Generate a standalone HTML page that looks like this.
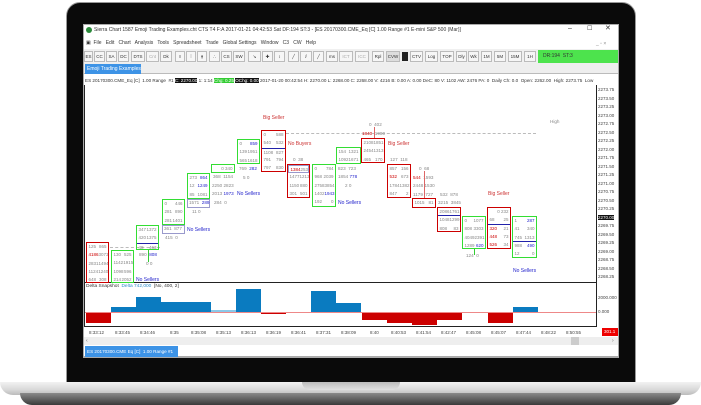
<!DOCTYPE html>
<html><head><meta charset="utf-8"><style>
*{margin:0;padding:0;box-sizing:border-box}
body{width:701px;height:405px;background:#fff;position:relative;overflow:hidden;font-family:"Liberation Sans",sans-serif}
.a{position:absolute}
.t{position:absolute;font-size:5px;line-height:6px;color:#333;white-space:nowrap}
.c{position:absolute;border:1.5px solid #3d3}
.c.r{border-color:#c00}
.c div{height:8.3px;font-size:4.5px;line-height:8px;color:#888;display:flex;justify-content:space-between;padding:0 1.5px;overflow:hidden}
.o{position:absolute;font-size:4.6px;color:#888;white-space:nowrap}
.bl{color:#22c;font-size:5px;position:absolute;white-space:nowrap}
.rd{color:#c33;font-size:5px;position:absolute;white-space:nowrap}
.tb{position:absolute;top:51px;height:11px;border:1px solid #bbb;background:#f6f6f6;font-size:4.5px;line-height:9px;text-align:center;color:#333}
.pl{position:absolute;left:598px;font-size:4.5px;color:#444}
.tm{position:absolute;top:330px;font-size:4.5px;color:#444}
.bar{position:absolute;width:25px}
</style></head><body>
<!-- laptop -->
<div class="a" style="left:66px;top:2px;width:570px;height:384px;background:#0a0a0a;border:1px solid #999;border-radius:14px 14px 0 0"></div>
<div class="a" style="left:0;top:382px;width:701px;height:13px;background:linear-gradient(#f2f2f2,#d8d8d8 60%,#bbb);border-radius:0 0 30px 30px"></div>
<div class="a" style="left:20px;top:393px;width:661px;height:12px;background:linear-gradient(#8a8a8a,#3a3a3a);border-radius:0 0 40px 40px"></div>
<div class="a" style="left:302px;top:382px;width:98px;height:8px;background:linear-gradient(#bbb,#e0e0e0);border-radius:0 0 8px 8px"></div>
<!-- screen -->
<div class="a" style="left:83px;top:24px;width:536px;height:334px;background:#fff;border:1px solid #aaa"></div>
<div class="a" style="left:86px;top:27px;width:6px;height:6px;border-radius:50%;background:#2a8a3a"></div>
<div class="t" style="left:94px;top:27px;font-size:5px">Sierra Chart 1587 Emoji Trading Examples.cht  CTS T4 F:A 2017-01-21  04:42:53 Sat  DF:194  ST:3 - [ES 20170300.CME_Eq [C]  1.00 Range  #1  E-mini S&amp;P 500 (Mar)]</div>
<div class="t" style="left:568px;top:26px;font-size:7px">–</div>
<div class="t" style="left:587px;top:26px;font-size:6px">☐</div>
<div class="t" style="left:605px;top:26px;font-size:7px">✕</div>
<div class="t" style="left:86px;top:40px">▣ &nbsp;File &nbsp; Edit &nbsp; Chart &nbsp; Analysis &nbsp; Tools &nbsp; Spreadsheet &nbsp; Trade &nbsp; Global Settings &nbsp; Window &nbsp; C3 &nbsp; CW &nbsp; Help</div>
<div class="t" style="left:596px;top:41px;color:#888">_ ▫ ×</div>
<div class="a" style="left:84px;top:49px;width:534px;height:14px;background:#f0f0f0"></div>
<div class="tb" style="left:84px;width:9px">ES</div><div class="tb" style="left:94px;width:11px">CC</div><div class="tb" style="left:106px;width:11px">SA</div><div class="tb" style="left:118px;width:11px">DC</div><div class="tb" style="left:131px;width:14px">DTS</div><div class="tb" style="left:146px;width:13px;color:#aaa">Cnt</div><div class="tb" style="left:160px;width:12px">Dk</div>
<div class="tb" style="left:175px;width:10px">⁝⁝</div><div class="tb" style="left:186px;width:10px">⁞</div><div class="tb" style="left:197px;width:10px">⫵</div><div class="tb" style="left:209px;width:11px">∴</div><div class="tb" style="left:221px;width:11px">CS</div><div class="tb" style="left:233px;width:12px">SW</div>
<div class="tb" style="left:248px;width:13px">↘</div><div class="tb" style="left:262px;width:11px">✚</div><div class="tb" style="left:274px;width:11px">↕</div><div class="tb" style="left:288px;width:11px">╱</div><div class="tb" style="left:300px;width:12px">⫽</div><div class="tb" style="left:313px;width:11px">╱</div><div class="tb" style="left:326px;width:12px">ms</div><div class="tb" style="left:339px;width:14px;color:#aaa">ICT</div><div class="tb" style="left:355px;width:14px;color:#aaa">ICC</div>
<div class="tb" style="left:372px;width:12px">Rpl</div><div class="tb" style="left:386px;width:14px;background:#ddd">CVW</div><div class="a" style="left:402px;top:52px;width:6px;height:9px;background:#222"></div>
<div class="tb" style="left:410px;width:13px">CTV</div><div class="tb" style="left:425px;width:13px">Log</div><div class="tb" style="left:440px;width:14px">TOP</div><div class="tb" style="left:456px;width:11px">Dly</div><div class="tb" style="left:468px;width:11px">Wk</div><div class="tb" style="left:481px;width:11px">1M</div><div class="tb" style="left:494px;width:12px">5M</div><div class="tb" style="left:508px;width:14px">15M</div><div class="tb" style="left:524px;width:12px">1H</div>
<div class="a" style="left:538px;top:50px;width:80px;height:13px;background:#4de34d"></div>
<div class="t" style="left:543px;top:53px">DR:194 &nbsp;ST:3</div>
<div class="a" style="left:84px;top:63px;width:534px;height:11px;background:#eee;border-bottom:1px solid #bbb"></div>
<div class="a" style="left:85px;top:64px;width:56px;height:10px;background:#3d93e6"></div>
<div class="t" style="left:87px;top:66px;color:#fff">Emoji Trading Examples</div>
<div class="t" style="left:85px;top:78px;font-size:4.6px">ES 20170300.CME_Eq [C] &nbsp;1.00 Range &nbsp;#1 <span style="background:#111;color:#fff">C: 2270.00</span> 1: 1:14 <span style="background:#3c3;color:#fff">Chg: 0.25</span> <span style="background:#111;color:#fff">OChg: 0.00</span> 2017-01-20 00:42:54 H: 2270.00 L: 2268.00 C: 2268.00 V: 4216 B: 0.00 A: 0.00 DeC: 80 V: 1102 AW: 2476 PA: 0 &nbsp;Daily Ch: 0.0 &nbsp;Open: 2262.00 &nbsp;High: 2273.75 &nbsp;Low</div>
<!-- chart frame -->
<div class="a" style="left:596px;top:85px;width:1px;height:241px;background:#222"></div>
<div class="a" style="left:84px;top:282px;width:513px;height:1px;background:#222"></div>
<div class="a" style="left:84px;top:326px;width:513px;height:1px;background:#222"></div>
<div class="a" style="left:84px;top:85px;width:1px;height:241px;background:#222"></div>
<!-- price labels -->
<div class="pl" style="top:87px">2273.75</div><div class="pl" style="top:96px">2273.50</div><div class="pl" style="top:104px">2273.25</div><div class="pl" style="top:113px">2273.00</div><div class="pl" style="top:121px">2272.75</div><div class="pl" style="top:130px">2272.50</div><div class="pl" style="top:138px">2272.25</div><div class="pl" style="top:147px">2272.00</div><div class="pl" style="top:155px">2271.75</div><div class="pl" style="top:164px">2271.50</div><div class="pl" style="top:172px">2271.25</div><div class="pl" style="top:181px">2271.00</div><div class="pl" style="top:189px">2270.75</div><div class="pl" style="top:198px">2270.50</div><div class="pl" style="top:206px">2270.25</div><div class="pl" style="top:215px;background:#111;color:#fff">2270.00</div><div class="pl" style="top:223px">2269.75</div><div class="pl" style="top:232px">2269.50</div><div class="pl" style="top:240px">2269.25</div><div class="pl" style="top:249px">2269.00</div><div class="pl" style="top:257px">2268.75</div><div class="pl" style="top:266px">2268.50</div><div class="pl" style="top:274px">2268.25</div>
<div class="pl" style="top:295px">2000.000</div><div class="pl" style="top:309px">0.000</div>
<!-- dashed lines -->
<div class="a" style="left:286px;top:133px;width:250px;border-top:1px dashed #bbb"></div>
<div class="a" style="left:110px;top:247px;width:50px;border-top:1px dashed #bbb"></div>
<div class="o" style="left:550px;top:119px">High</div>
<!-- candles -->
<div class="c r" style="left:86px;top:242px;width:23px;height:41px"><div><span>125</span><span>865</span></div><div><span style="color:#c00">4186</span><span>3073</span></div><div><span>2831</span><span>1494</span></div><div><span>1124</span><span>1240</span></div><div><span>648</span><span>308</span></div></div>
<div class="c" style="left:111px;top:250px;width:23px;height:33px"><div><span>130</span><span>525</span></div><div><span>1142</span><span>1915</span></div><div><span>1098</span><span>596</span></div><div><span>214</span><span>2052</span></div></div>
<div class="bl" style="left:136px;top:277px">No Sellers</div>
<div class="c" style="left:136px;top:225px;width:23px;height:25px"><div><span>347</span><span>1372</span></div><div><span>420</span><span>1375</span></div><div style="border-top:1px solid #22a"><span>48</span><span>463</span></div></div>
<div class="o" style="left:139px;top:252px">890 &nbsp;<span style="color:#22c">808</span></div><div class="o" style="left:146px;top:261px">0 0</div><div class="a" style="left:148px;top:250px;width:1px;height:12px;background:#3c3"></div>
<div class="c" style="left:162px;top:199px;width:23px;height:26px"><div><span>0</span><span>446</span></div><div><span>281</span><span>890</span></div><div><span>281</span><span>1401</span></div></div>
<div class="a" style="left:162px;top:225px;width:23px;height:9px;border:1px solid #99c"></div><div class="o" style="left:164px;top:226px">361 &nbsp;877</div><div class="o" style="left:165px;top:235px">415 &nbsp;0</div>
<div class="bl" style="left:187px;top:227px">No Sellers</div>
<div class="c" style="left:187px;top:173px;width:23px;height:26px"><div><span>273</span><span style="color:#22c">864</span></div><div><span>12</span><span style="color:#22c">1249</span></div><div><span>85</span><span>1081</span></div></div>
<div class="a" style="left:187px;top:199px;width:23px;height:9px;border:1px solid #99c"></div><div class="o" style="left:189px;top:200px">1571 &nbsp;<span style="color:#22c">289</span></div><div class="o" style="left:192px;top:209px">11 0</div>
<div class="c" style="left:211px;top:164px;width:24px;height:9px"><div><span></span><span>0 340</span></div></div>
<div class="o" style="left:213px;top:174px">368 &nbsp;1154</div><div class="o" style="left:212px;top:183px">2250 2823</div><div class="o" style="left:212px;top:191px">2013 <span style="color:#22c">1973</span></div><div class="o" style="left:214px;top:200px">284 &nbsp;0</div>
<div class="bl" style="left:237px;top:191px">No Sellers</div>
<div class="c" style="left:237px;top:139px;width:23px;height:25px"><div><span>0</span><span style="color:#22c">859</span></div><div><span>139</span><span>1951</span></div><div><span>565</span><span>1618</span></div></div>
<div class="o" style="left:239px;top:166px">769 &nbsp;<span style="color:#22c">282</span></div><div class="o" style="left:243px;top:175px">5 0</div>
<div class="c r" style="left:261px;top:130px;width:25px;height:42px"><div><span>0</span><span>588</span></div><div><span>540</span><span>532</span></div><div style="border-top:1px solid #22a"><span>1108</span><span>827</span></div><div><span>791</span><span>794</span></div><div><span>797</span><span>830</span></div></div>
<div class="rd" style="left:263px;top:115px">Big Seller</div><div class="rd" style="left:288px;top:141px">No Buyers</div>
<div class="o" style="left:293px;top:157px">0 &nbsp;38</div>
<div class="c r" style="left:287px;top:164px;width:23px;height:34px"><div style="border:1px solid #99c"><span style="color:#c00">1384</span><span>2538</span></div><div><span>1477</span><span>1213</span></div><div><span>1150</span><span>880</span></div><div><span>301</span><span>501</span></div></div>
<div class="c" style="left:312px;top:164px;width:24px;height:43px"><div><span>0</span><span>784</span></div><div><span>968</span><span>2039</span></div><div><span>2758</span><span>3854</span></div><div><span>1402</span><span style="color:#22c">1943</span></div><div><span>192</span><span>0</span></div></div>
<div class="bl" style="left:338px;top:200px">No Sellers</div>
<div class="c" style="left:336px;top:147px;width:25px;height:17px"><div><span>154</span><span>1321</span></div><div><span>1092</span><span>1671</span></div></div>
<div class="o" style="left:338px;top:166px">823 &nbsp;723</div><div class="o" style="left:338px;top:174px">1854 <span style="color:#22c">778</span></div><div class="o" style="left:345px;top:183px">2 0</div>
<div class="o" style="left:369px;top:122px">0 &nbsp;402</div><div class="a" style="left:374px;top:127px;width:1px;height:11px;background:#d66"></div>
<div class="o" style="left:362px;top:131px"><span style="color:#c00">1840</span> &nbsp;1980</div>
<div class="c r" style="left:361px;top:138px;width:24px;height:25px"><div><span>2108</span><span>1851</span></div><div><span>2454</span><span>1313</span></div><div><span>465</span><span>170</span></div></div>
<div class="rd" style="left:388px;top:141px">Big Seller</div>
<div class="o" style="left:390px;top:157px">127 &nbsp;118</div>
<div class="c r" style="left:387px;top:164px;width:24px;height:34px"><div><span>857</span><span>156</span></div><div><span style="color:#c00">532</span><span>673</span></div><div><span>1784</span><span>1382</span></div><div><span>847</span><span>2</span></div></div>
<div class="o" style="left:419px;top:166px">0 &nbsp;68</div><div class="o" style="left:413px;top:175px"><span style="color:#c00">544</span> &nbsp;1593</div><div class="o" style="left:413px;top:183px">2448 1530</div><div class="o" style="left:413px;top:192px">1179 &nbsp;727</div>
<div class="a" style="left:424px;top:171px;width:1px;height:27px;background:#d66"></div>
<div class="c r" style="left:412px;top:198px;width:24px;height:10px"><div><span>1015</span><span>81</span></div></div>
<div class="o" style="left:440px;top:192px">532 &nbsp;878</div><div class="o" style="left:438px;top:200px">3215 &nbsp;3845</div>
<div class="c r" style="left:437px;top:207px;width:24px;height:25px"><div style="border-bottom:1px solid #22a"><span>2086</span><span>1761</span></div><div><span>1048</span><span>1299</span></div><div><span>808</span><span>83</span></div></div>
<div class="c" style="left:462px;top:216px;width:24px;height:33px"><div><span>0</span><span>1077</span></div><div><span>808</span><span>3303</span></div><div><span>4049</span><span>2391</span></div><div><span>1289</span><span style="color:#22c">620</span></div></div>
<div class="o" style="left:466px;top:253px">124 &nbsp;0</div><div class="a" style="left:474px;top:249px;width:1px;height:6px;background:#3c3"></div>
<div class="rd" style="left:488px;top:191px">Big Seller</div>
<div class="c r" style="left:487px;top:207px;width:24px;height:42px"><div><span></span><span>0 232</span></div><div style="border-bottom:1px solid #22a"><span>68</span><span>25</span></div><div><span style="color:#c00">320</span><span>21</span></div><div><span style="color:#c00">448</span><span>73</span></div><div><span style="color:#c00">526</span><span>34</span></div></div>
<div class="c" style="left:512px;top:216px;width:25px;height:42px"><div><span>1</span><span style="color:#22c">287</span></div><div><span>41</span><span>340</span></div><div style="border-bottom:1px solid #22a"><span>745</span><span>1313</span></div><div><span>988</span><span style="color:#22c">490</span></div><div><span>12</span><span>0</span></div></div>
<div class="bl" style="left:513px;top:268px">No Sellers</div>
<!-- subchart -->
<div class="t" style="left:86px;top:284px;font-size:4.8px">Delta Snapshot &nbsp;<span style="color:#2a8ac8">Delta 742,000</span> &nbsp;[No, 400, 2]</div>
<div class="a" style="left:85px;top:312px;width:511px;height:1px;background:#e88"></div>
<div class="bar" style="left:86px;top:313px;height:10px;background:#c00"></div>
<div class="bar" style="left:111px;top:307px;height:5px;background:#0a7bc0"></div>
<div class="bar" style="left:136px;top:297px;height:15px;background:#0a7bc0"></div>
<div class="bar" style="left:161px;top:302px;height:10px;background:#0a7bc0"></div>
<div class="bar" style="left:186px;top:302px;height:10px;background:#0a7bc0"></div>
<div class="bar" style="left:211px;top:310px;height:2px;background:#8cc8e8"></div>
<div class="bar" style="left:236px;top:289px;height:23px;background:#0a7bc0"></div>
<div class="bar" style="left:261px;top:313px;height:1px;background:#c00"></div>
<div class="bar" style="left:311px;top:291px;height:21px;background:#0a7bc0"></div>
<div class="bar" style="left:336px;top:303px;height:9px;background:#0a7bc0"></div>
<div class="bar" style="left:362px;top:313px;height:7px;background:#c00"></div>
<div class="bar" style="left:387px;top:313px;height:10px;background:#c00"></div>
<div class="bar" style="left:412px;top:313px;height:12px;background:#c00"></div>
<div class="bar" style="left:437px;top:313px;height:7px;background:#c00"></div>
<div class="bar" style="left:488px;top:313px;height:10px;background:#c00"></div>
<div class="bar" style="left:513px;top:307px;height:5px;background:#0a7bc0"></div>
<!-- times -->
<div class="tm" style="left:89px">8:33:12</div><div class="tm" style="left:115px">8:33:45</div><div class="tm" style="left:140px">8:34:46</div><div class="tm" style="left:170px">8:35</div><div class="tm" style="left:191px">8:35:08</div><div class="tm" style="left:216px">8:35:13</div><div class="tm" style="left:241px">8:36:13</div><div class="tm" style="left:266px">8:36:19</div><div class="tm" style="left:291px">8:36:41</div><div class="tm" style="left:316px">8:37:31</div><div class="tm" style="left:341px">8:38:09</div><div class="tm" style="left:370px">8:40</div><div class="tm" style="left:391px">8:40:53</div><div class="tm" style="left:416px">8:41:54</div><div class="tm" style="left:441px">8:42:47</div><div class="tm" style="left:466px">8:45:08</div><div class="tm" style="left:491px">8:45:07</div><div class="tm" style="left:516px">8:47:44</div><div class="tm" style="left:541px">8:48:22</div><div class="tm" style="left:566px">8:50:55</div>
<div class="a" style="left:602px;top:328px;width:16px;height:8px;background:#e00"></div><div class="t" style="left:604px;top:329px;color:#fff;font-size:4.5px">301.1</div>
<div class="a" style="left:84px;top:337px;width:534px;height:8px;background:#eee"></div>
<div class="a" style="left:571px;top:337px;width:8px;height:8px;background:#ccc"></div>
<div class="t" style="left:86px;top:338px;color:#666">‹</div><div class="t" style="left:612px;top:338px;color:#666">›</div>
<div class="a" style="left:84px;top:356px;width:534px;height:1px;background:#aaa"></div>
<div class="a" style="left:85px;top:346px;width:93px;height:11px;background:#3d93e6"></div>
<div class="t" style="left:87px;top:349px;color:#fff;font-size:4.6px">ES 20170300.CME Eq [C] &nbsp;1.00 Range #1</div>
</body></html>
